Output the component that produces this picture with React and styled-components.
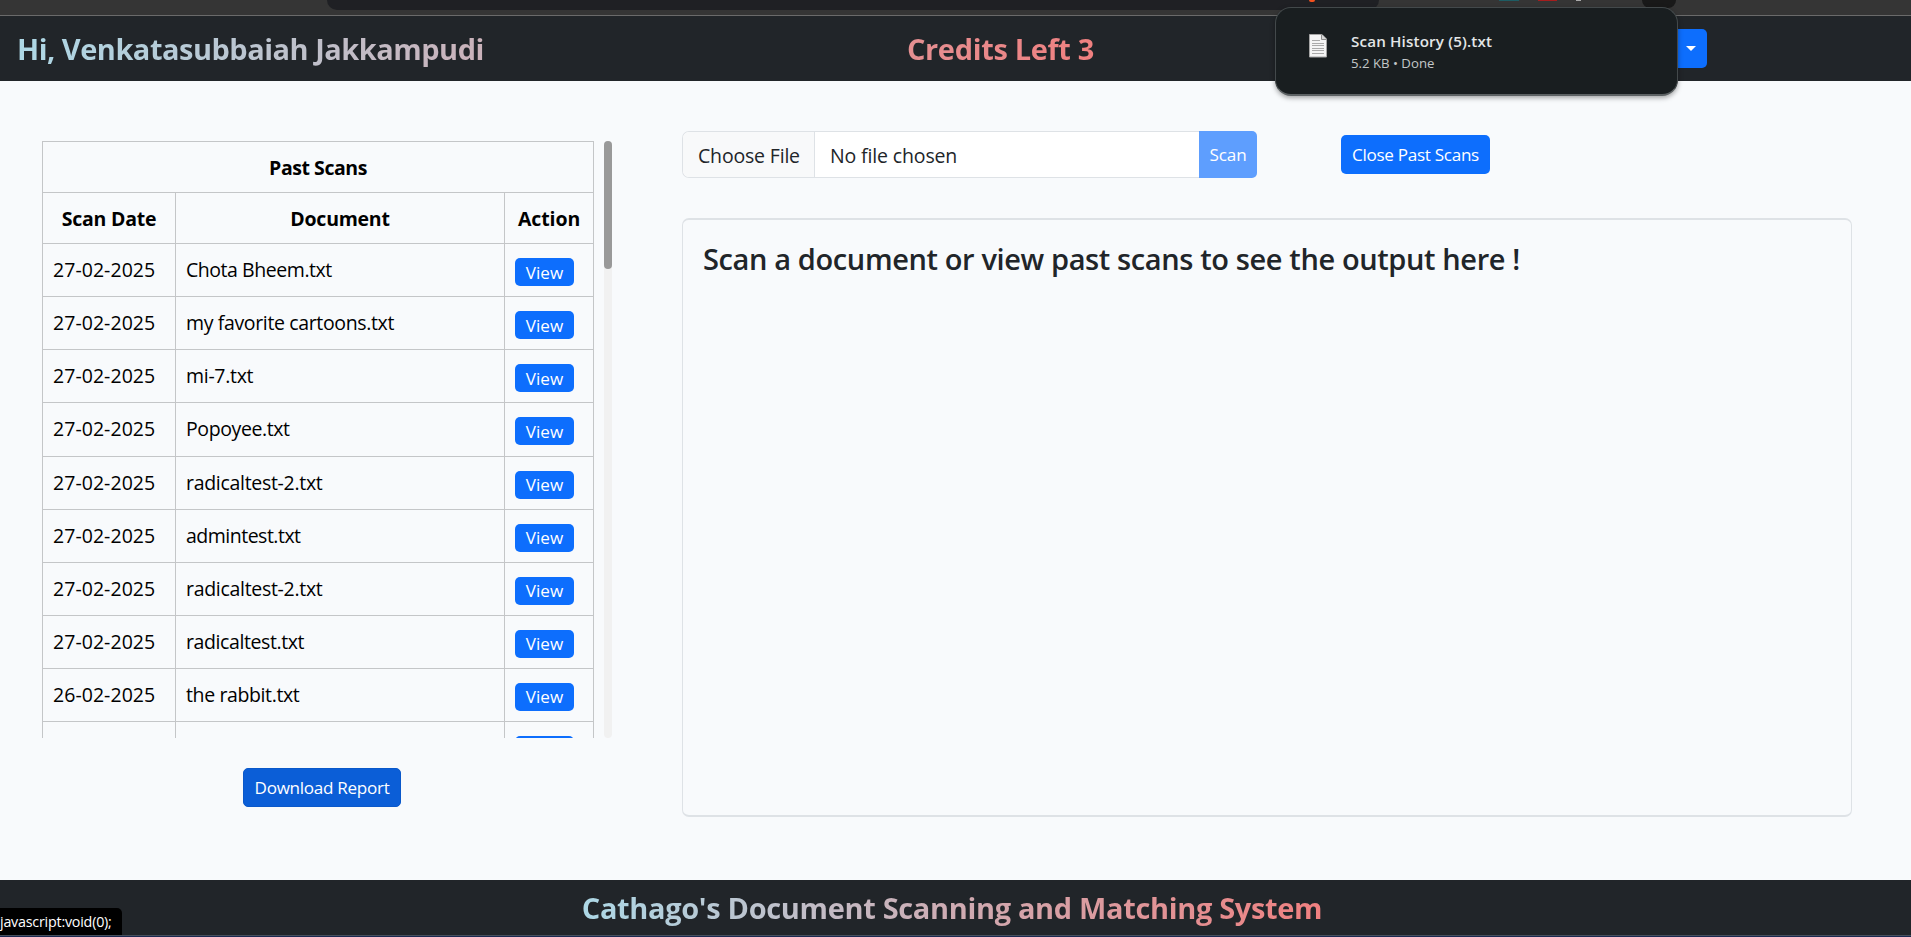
import React from "react";
import styled, { createGlobalStyle } from "styled-components";

const GlobalStyle = createGlobalStyle`
  *, *::before, *::after { box-sizing: border-box; }
  body {
    margin: 0;
    overflow: hidden;
    background: #f8fafc;
    color: #212529;
    font-family: "Open Sans", "Noto Sans", sans-serif;
    font-size: 19.5px;
    line-height: 30px;
  }
`;

const Screen = styled.div`
  position: relative;
  display: flex;
  flex-direction: column;
  width: 1911px;
  height: 937px;
  overflow: hidden;
  background: #f8fafc;
`;

const BrowserStrip = styled.div`
  flex: none;
  display: flex;
  height: 16px;
  padding-left: 327px;
  background: #353535;
  border-bottom: 1px solid #6a6a6a;
`;

const AddressBar = styled.div`
  width: 1052px;
  height: 10px;
  background: #1f2024;
  border-radius: 0 0 10px 10px;
  padding-left: 982px;
`;

const Shield = styled.div`
  width: 6px;
  height: 2px;
  background: #f4511e;
  border-radius: 0 0 3px 3px;
`;

const Extension = styled.div`
  width: ${(p) => p.$width}px;
  height: ${(p) => p.$height || 1}px;
  margin-left: ${(p) => p.$gap}px;
  background: ${(p) => p.$color};
  border-radius: ${(p) => (p.$round ? "0 0 14px 14px" : "0")};
`;

const Header = styled.header`
  flex: none;
  display: flex;
  align-items: center;
  height: 65px;
  padding-left: 17px;
  background: #212529;
`;

const HeaderTitles = styled.div`
  display: flex;
  justify-content: space-between;
  width: 1077px;
  color: transparent;
  background: linear-gradient(to right, lightblue, lightcoral);
  -webkit-background-clip: text;
  background-clip: text;
`;

const Title = styled.span`
  font-size: 29px;
  font-weight: 700;
  line-height: 40px;
  letter-spacing: ${(p) => p.$tracking}px;
  white-space: nowrap;
`;

const MenuToggle = styled.button`
  display: flex;
  align-items: center;
  justify-content: flex-end;
  width: 57px;
  height: 39px;
  margin-left: 556px;
  padding: 0 11px 0 0;
  border: 0;
  border-radius: 5px;
  background: #0d6efd;
`;

const Caret = styled.span`
  border: 5px solid transparent;
  border-top-color: #fff;
  border-bottom: 0;
`;

const Main = styled.main`
  flex: none;
  display: flex;
  height: 799px;
`;

const HistoryPanel = styled.section`
  display: flex;
  flex-direction: column;
  align-items: flex-start;
  width: 682px;
  padding: 60px 0 0 42px;
`;

const ScrollArea = styled.div`
  display: flex;
  gap: 10px;
  height: 597px;
  overflow: hidden;
`;

const Table = styled.div`
  flex: none;
  width: 552px;
  height: 640px;
  color: #000;
  border: 1px solid #c4c6c8;
`;

const Row = styled.div`
  display: grid;
  grid-template-columns: ${(p) => (p.$caption ? "1fr" : "132px 329px 1fr")};
  height: ${(p) => (p.$head ? 51.1 : 53.1)}px;
  border-bottom: 1px solid #c4c6c8;
`;

const Cell = styled.div`
  padding: 11px 10px 0;
  letter-spacing: ${(p) => p.$tracking || 0}px;
  white-space: nowrap;
  & + & { border-left: 1px solid #c4c6c8; }
`;

const HeadCell = styled(Cell)`
  font-weight: 700;
  text-align: center;
`;

const Button = styled.button`
  height: 39px;
  padding: 0;
  border: 0;
  border-radius: 5px;
  color: #fff;
  background: #0d6efd;
  font-family: inherit;
  font-size: 17.1px;
  letter-spacing: -0.3px;
  line-height: 26px;
  white-space: nowrap;
`;

const ViewButton = styled(Button)`
  display: block;
  width: 59px;
  height: 28px;
  margin-top: 3px;
  padding: 1px 0 0;
  letter-spacing: 0;
`;

const DownloadButton = styled(Button)`
  width: 158px;
  margin: 30px 0 0 201px;
  background: #0b5ed7;
  border: 1px solid #0a58ca;
`;

const CloseButton = styled(Button)`
  width: 149px;
`;

const ScanButton = styled(Button)`
  width: 58px;
  height: 47px;
  border-radius: 0 5px 5px 0;
  background: #5e9efe;
  letter-spacing: -0.1px;
`;

const Track = styled.div`
  width: 8px;
  height: 597px;
  border-radius: 4px;
  background: #f1f1f1;
`;

const Thumb = styled.div`
  height: 128px;
  border-radius: 4px;
  background: #999;
`;

const ScanPanel = styled.section`
  display: flex;
  flex-direction: column;
  gap: 40px;
  width: 1170px;
  padding-top: 50px;
`;

const Controls = styled.div`
  display: flex;
  align-items: center;
  gap: 84px;
`;

const InputGroup = styled.div`
  display: flex;
`;

const FileInput = styled.div`
  display: flex;
  width: 517px;
  height: 47px;
  border: 1px solid #dee2e6;
  border-right: 0;
  border-radius: 7px 0 0 7px;
  background: #fff;
  overflow: hidden;
  line-height: 47px;
`;

const ChooseFile = styled.div`
  width: 132px;
  padding-left: 15px;
  background: #f8f9fa;
  border-right: 1px solid #dee2e6;
  letter-spacing: -0.18px;
  white-space: nowrap;
`;

const FileName = styled.div`
  padding-left: 15px;
  letter-spacing: -0.14px;
`;

const OutputCard = styled.div`
  height: 599px;
  padding: 21px 20px 20px;
  border: 1px solid #dee2e6;
  border-width: 2px 1px;
  border-radius: 7px;
`;

const OutputHeading = styled.h4`
  margin: 0;
  font-size: 29px;
  font-weight: 600;
  letter-spacing: -0.38px;
  line-height: 36px;
  white-space: nowrap;
`;

const Footer = styled.footer`
  flex: none;
  display: flex;
  justify-content: center;
  height: 55px;
  padding: 8px 7px 0 0;
  background: #212529;
`;

const FooterTitle = styled(Title)`
  color: transparent;
  background: linear-gradient(to right, lightblue, lightcoral);
  -webkit-background-clip: text;
  background-clip: text;
`;

const TaskbarEdge = styled.div`
  flex: none;
  height: 2px;
  background: #1b2a52;
  border-top: 1px solid #47505c;
`;

const StatusBubble = styled.div`
  position: absolute;
  left: 0;
  bottom: 2px;
  width: 122px;
  height: 27px;
  border-radius: 0 5px 0 0;
  background: #000;
  color: #fff;
  font-size: 14.3px;
  line-height: 27px;
  letter-spacing: -0.22px;
  white-space: nowrap;
`;

const DownloadBubble = styled.aside`
  position: absolute;
  left: 1275px;
  top: 7px;
  display: flex;
  gap: 24px;
  width: 403px;
  height: 89px;
  padding: 26px 0 0 33px;
  border: 1px solid #43494b;
  border-bottom: 2px solid #5d6264;
  border-radius: 16px;
  background: #191e20;
  box-shadow: 0 2px 5px rgba(0, 0, 0, 0.35);
`;

const DownloadInfo = styled.div`
  display: flex;
  flex-direction: column;
`;

const DownloadName = styled.strong`
  margin-top: -4px;
  color: #e3e6e7;
  font-size: 15.2px;
  font-weight: 600;
  line-height: 22px;
  letter-spacing: 0.15px;
`;

const DownloadMeta = styled.span`
  margin-top: 1px;
  color: #c3c7c8;
  font-size: 13.2px;
  line-height: 20px;
`;

const FileIcon = () => (
  <svg width="18" height="24" viewBox="0 0 18 24">
    <path d="M.5.5h12.5l4.5 4.5v18H.5z" fill="#f4f4f4" stroke="#a5a5a5" />
    <path d="M12.5.5V5.5h5" fill="#d8d8d8" stroke="#8f8f8f" />
    <path
      d="M3 6.5h8M3 9.5h12M3 11.5h12M3 14.5h12M3 16.5h12M3 19.5h12"
      stroke="#a9a9a9"
    />
  </svg>
);

const scans = [
  { date: "27-02-2025", name: "Chota Bheem.txt", tracking: -0.45 },
  { date: "27-02-2025", name: "my favorite cartoons.txt", tracking: -0.36 },
  { date: "27-02-2025", name: "mi-7.txt", tracking: -0.3 },
  { date: "27-02-2025", name: "Popoyee.txt", tracking: -0.4 },
  { date: "27-02-2025", name: "radicaltest-2.txt", tracking: -0.3 },
  { date: "27-02-2025", name: "admintest.txt", tracking: -0.5 },
  { date: "27-02-2025", name: "radicaltest-2.txt", tracking: -0.3 },
  { date: "27-02-2025", name: "radicaltest.txt", tracking: -0.4 },
  { date: "26-02-2025", name: "the rabbit.txt", tracking: -0.38 },
];

export default function App() {
  return (
    <Screen>
      <GlobalStyle />
      <BrowserStrip>
        <AddressBar>
          <Shield />
        </AddressBar>
        <Extension $width={20} $gap={120} $color="#1d5c63" />
        <Extension $width={19} $gap={19} $color="#a51d1d" />
        <Extension $width={5} $gap={19} $color="#aaa" />
        <Extension $width={34} $height={8} $gap={61} $color="#191919" $round />
      </BrowserStrip>

      <Header>
        <HeaderTitles>
          <Title $tracking={-0.5}>Hi, Venkatasubbaiah Jakkampudi</Title>
          <Title $tracking={-0.35}>Credits Left 3</Title>
        </HeaderTitles>
        <MenuToggle aria-label="Account menu">
          <Caret />
        </MenuToggle>
      </Header>

      <Main>
        <HistoryPanel>
          <ScrollArea>
            <Table>
              <Row $caption $head>
                <HeadCell $tracking={-0.45}>Past Scans</HeadCell>
              </Row>
              <Row $head>
                <HeadCell $tracking={-0.25}>Scan Date</HeadCell>
                <HeadCell $tracking={-0.25}>Document</HeadCell>
                <HeadCell $tracking={-0.1}>Action</HeadCell>
              </Row>
              {scans.map((scan, i) => (
                <Row key={i}>
                  <Cell $tracking={0.05}>{scan.date}</Cell>
                  <Cell $tracking={scan.tracking}>{scan.name}</Cell>
                  <Cell>
                    <ViewButton>View</ViewButton>
                  </Cell>
                </Row>
              ))}
              <Row>
                <Cell />
                <Cell />
                <Cell>
                  <ViewButton />
                </Cell>
              </Row>
            </Table>
            <Track>
              <Thumb />
            </Track>
          </ScrollArea>
          <DownloadButton>Download Report</DownloadButton>
        </HistoryPanel>

        <ScanPanel>
          <Controls>
            <InputGroup>
              <FileInput>
                <ChooseFile>Choose File</ChooseFile>
                <FileName>No file chosen</FileName>
              </FileInput>
              <ScanButton>Scan</ScanButton>
            </InputGroup>
            <CloseButton>Close Past Scans</CloseButton>
          </Controls>
          <OutputCard>
            <OutputHeading>
              Scan a document or view past scans to see the output here !
            </OutputHeading>
          </OutputCard>
        </ScanPanel>
      </Main>

      <Footer>
        <FooterTitle $tracking={-0.34}>
          Cathago's Document Scanning and Matching System
        </FooterTitle>
      </Footer>
      <TaskbarEdge />

      <StatusBubble>javascript:void(0);</StatusBubble>
      <DownloadBubble>
        <FileIcon />
        <DownloadInfo>
          <DownloadName>Scan History (5).txt</DownloadName>
          <DownloadMeta>5.2 KB • Done</DownloadMeta>
        </DownloadInfo>
      </DownloadBubble>
    </Screen>
  );
}
